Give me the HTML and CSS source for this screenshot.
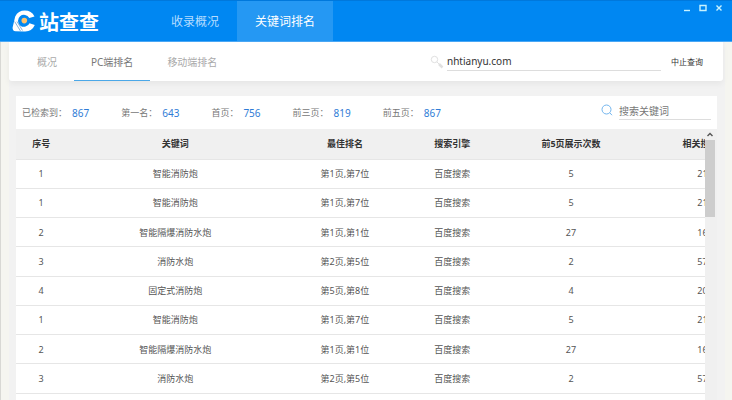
FILE: index.html
```html
<!DOCTYPE html>
<html lang="zh-CN">
<head>
    <meta charset="UTF-8">
    <meta name="viewport" content="width=device-width, initial-scale=1.0">
    <title>站查查</title>
    <link rel="stylesheet" href="styles.css">
</head>
<body>
    <header class="topbar">
        <div class="logo">
            <svg class="logo-icon" viewBox="0 0 24 24" aria-hidden="true">
                <path d="M22.500 7.500A10.800 10.800 0 0 0 3.200 7.500L.6 18.500Q.4 22 3.500 22.200L12 22.400A10.800 10.800 0 0 0 22.800 16L17.500 14.200A6 6 0 1 1 17.300 9Z" fill="#fff"/>
                <path d="M2.600 12.500L8.500 22M5 12.500L10.500 21.500" stroke="#7ba9d6" stroke-width=".9"/>
                <circle cx="12.300" cy="11.600" r="2.800" fill="#ffc36b"/>
            </svg>
            <span>站查查</span>
        </div>
        <nav class="nav">
            <a href="#">收录概况</a>
            <a href="#" class="active">关键词排名</a>
        </nav>
        <div class="window-buttons">
            <button type="button" aria-label="最小化"><svg viewBox="0 0 8 8"><path d="M1 6.500H7"/></svg></button>
            <button type="button" aria-label="最大化"><svg viewBox="0 0 8 8"><path d="M1 1.500H7V6.500H1Z"/></svg></button>
            <button type="button" aria-label="关闭"><svg viewBox="0 0 8 8"><path d="M1.500 1.500L6.500 6.500M6.500 1.500L1.500 6.500"/></svg></button>
        </div>
    </header>
    <main class="main">
        <section class="query">
            <nav class="tabs">
                <a href="#">概况</a>
                <a href="#" class="active">PC端排名</a>
                <a href="#">移动端排名</a>
            </nav>
            <form class="site-form">
                <label for="site" aria-label="网址">
                    <svg class="icon-site" viewBox="0 0 14 14"><circle cx="4.500" cy="4.500" r="3.200"/><path d="M7 7L9 9"/><path d="M9 9L12.500 12.500" stroke-width="2.500"/></svg>
                </label>
                <input id="site" type="text" value="nhtianyu.com">
                <button type="button">中止查询</button>
            </form>
        </section>
        <section class="panel">
            <div class="summary">
                <dl class="stats">
                    <div><dt>已检索到：</dt><dd>867</dd></div>
                    <div><dt>第一名：</dt><dd>643</dd></div>
                    <div><dt>首页：</dt><dd>756</dd></div>
                    <div><dt>前三页：</dt><dd>819</dd></div>
                    <div><dt>前五页：</dt><dd>867</dd></div>
                </dl>
                <div class="search">
                    <label for="keyword" aria-label="搜索关键词">
                        <svg class="icon-search" viewBox="0 0 12 12"><circle cx="5.500" cy="5.500" r="4.500"/><path d="M8.800 8.800L11 11.200"/></svg>
                    </label>
                    <input id="keyword" type="text" placeholder="搜索关键词">
                </div>
            </div>
            <div class="list">
                <div class="table-wrap">
                    <table>
                        <thead>
                            <tr><th>序号</th><th>关键词</th><th>最佳排名</th><th>搜索引擎</th><th>前5页展示次数</th><th>相关搜索数</th></tr>
                        </thead>
                        <tbody>
                            <tr><td>1</td><td>智能消防炮</td><td>第1页,第7位</td><td>百度搜索</td><td>5</td><td>217</td></tr>
                            <tr><td>1</td><td>智能消防炮</td><td>第1页,第7位</td><td>百度搜索</td><td>5</td><td>217</td></tr>
                            <tr><td>2</td><td>智能隔爆消防水炮</td><td>第1页,第1位</td><td>百度搜索</td><td>27</td><td>160</td></tr>
                            <tr><td>3</td><td>消防水炮</td><td>第2页,第5位</td><td>百度搜索</td><td>2</td><td>577</td></tr>
                            <tr><td>4</td><td>固定式消防炮</td><td>第5页,第8位</td><td>百度搜索</td><td>4</td><td>200</td></tr>
                            <tr><td>1</td><td>智能消防炮</td><td>第1页,第7位</td><td>百度搜索</td><td>5</td><td>217</td></tr>
                            <tr><td>2</td><td>智能隔爆消防水炮</td><td>第1页,第1位</td><td>百度搜索</td><td>27</td><td>160</td></tr>
                            <tr><td>3</td><td>消防水炮</td><td>第2页,第5位</td><td>百度搜索</td><td>2</td><td>577</td></tr>
                            <tr><td></td><td></td><td></td><td></td><td></td><td></td></tr>
                        </tbody>
                    </table>
                </div>
                <div class="scrollbar">
                    <svg class="scroll-arrow" viewBox="0 0 10 11"><path d="M2.500 7L5 4.500L7.500 7"/></svg>
                    <div class="scroll-thumb"></div>
                </div>
            </div>
        </section>
    </main>
</body>
</html>
```

FILE: styles.css
```css
*{
    box-sizing: border-box;
}
body{
    height: 100vh;
    margin: 0;
    display: flex;
    flex-direction: column;
    overflow: hidden;
    background-color: #f5f5f0;
    font-family: "Noto Sans", "Noto Sans CJK SC", sans-serif;
    font-size: 9px;
    color: #555;
}
a{
    text-decoration: none;
}
button, input{
    padding: 0;
    border: 0;
    background: none;
    font-family: inherit;
}
input{
    outline: none;
}
svg{
    display: block;
    fill: none;
}
.topbar{
    flex: none;
    height: 42px;
    display: flex;
    border-top: 1px solid #0078dc;
    border-bottom: 1px solid #4ba8f5;
    background-color: #0087f2;
}
.logo{
    width: 153px;
    padding-left: 12px;
    display: flex;
    align-items: center;
    gap: 3px;
    color: #fff;
    font-size: 20px;
    font-weight: bold;
}
.logo-icon{
    width: 24px;
    height: 24px;
}
.nav{
    display: flex;
}
.nav a{
    padding: 0 18px;
    display: flex;
    align-items: center;
    color: #b5dcff;
    font-size: 12px;
}
.nav .active{
    background-color: #2598f3;
    color: #fff;
}
.window-buttons{
    margin-left: auto;
    padding: 3px 9px 0 0;
    display: flex;
    align-items: flex-start;
    gap: 8px;
}
.window-buttons svg{
    width: 8px;
    height: 8px;
    stroke: #c8f2ff;
    stroke-width: 1.4;
}
.main{
    flex: 1;
    min-height: 0;
    padding: 0 9px 0 8px;
    display: flex;
    flex-direction: column;
    border-left: 1px solid #d8d8d4;
    background: linear-gradient(#f2f2f2, #f2f2f2) no-repeat 8px 0 / calc(100% - 15px) 100%;
}
.query{
    flex: none;
    height: 39px;
    padding: 0 20px 0 11px;
    display: flex;
    justify-content: space-between;
    background-color: #fff;
    border-radius: 0 0 3px 3px;
    box-shadow: 0 3px 6px #0000000d;
}
.tabs{
    display: flex;
}
.tabs a{
    padding: 0 17px;
    display: flex;
    align-items: center;
    border-bottom: 1px solid transparent;
    color: #aaa;
    font-size: 10px;
}
.tabs .active{
    border-color: #4ba8e8;
    color: #777;
}
.site-form{
    display: flex;
    align-items: center;
}
.icon-site{
    width: 14px;
    height: 14px;
    margin-right: 3px;
    stroke: #e0e0e0;
}
.site-form input{
    width: 214px;
    height: 18px;
    margin-right: 10px;
    border-bottom: 1px solid #ddd;
    color: #333;
    font-size: 10px;
}
.site-form button{
    color: #333;
    font-size: 8px;
}
.panel{
    flex: 1;
    min-height: 0;
    margin: 15px 6px 0 7px;
    display: flex;
    flex-direction: column;
    background-color: #fff;
}
.summary{
    flex: none;
    height: 33px;
    padding: 0 6px;
    display: flex;
    justify-content: space-between;
}
.stats{
    margin: 0;
    display: flex;
    align-items: center;
    gap: 32px;
    color: #777;
}
.stats div{
    display: flex;
    align-items: center;
    gap: 5px;
}
.stats dd{
    margin: 0;
    color: #2f7cd6;
    font-size: 10px;
}
.search{
    padding-top: 6px;
    display: flex;
    align-items: flex-start;
    gap: 6px;
}
.icon-search{
    width: 12px;
    height: 12px;
    margin-top: 2px;
    stroke: #72b5ee;
}
.search input{
    width: 92px;
    height: 18px;
    border-bottom: 1px solid #ddd;
    font-size: 10px;
}
.search input::placeholder{
    color: #777;
}
.list{
    flex: 1;
    min-height: 0;
    display: flex;
}
.table-wrap{
    flex: 1;
    overflow: hidden;
}
table{
    width: 109%;
    height: 294px;
    table-layout: fixed;
    border-collapse: collapse;
    text-align: center;
}
th, td{
    height: 29px;
    padding: 0;
    border-bottom: 1px solid #e6e6e6;
}
th{
    height: 30px;
    background-color: #f0f0f0;
    color: #333;
}
th:nth-child(1){
    width: 6.7%;
}
th:nth-child(2){
    width: 29%;
}
th:nth-child(3){
    width: 16.2%;
}
th:nth-child(4){
    width: 12.4%;
}
th:nth-child(5){
    width: 19.2%;
}
.scrollbar{
    width: 12px;
    padding: 0 2px 0 0;
    background-color: #f0f0f0;
}
.scroll-arrow{
    width: 10px;
    height: 11px;
    stroke: #555;
    stroke-width: 1.4;
}
.scroll-thumb{
    height: 77px;
    background-color: #cdcdcd;
}
```
